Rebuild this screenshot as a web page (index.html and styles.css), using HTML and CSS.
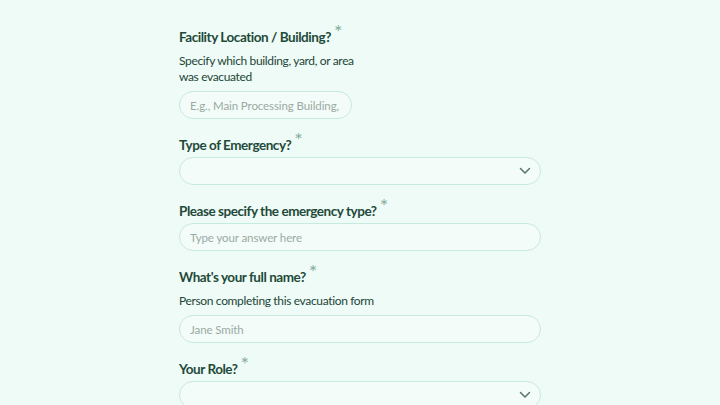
FILE: index.html
```html
<!DOCTYPE html>
<html lang="en">
<head>
<meta charset="utf-8">
<title>Evacuation Form</title>
<link rel="stylesheet" href="styles.css">
</head>
<body>
<main class="form">
  <div class="field narrow">
    <label class="label">Facility Location / Building?<span class="req">*</span></label>
    <p class="desc">Specify which building, yard, or area was evacuated</p>
    <div class="input short"><span class="ph">E.g., Main Processing Building, North Yard</span></div>
  </div>
  <div class="field">
    <label class="label">Type of Emergency?<span class="req">*</span></label>
    <div class="input select">
      <svg class="chev" width="12" height="8" viewBox="0 0 12 8"><path d="M1.5 1.5 L6 6 L10.5 1.5" fill="none" stroke="#58756a" stroke-width="1.5" stroke-linecap="round" stroke-linejoin="round"/></svg>
    </div>
  </div>
  <div class="field">
    <label class="label">Please specify the emergency type?<span class="req">*</span></label>
    <div class="input"><span class="ph">Type your answer here</span></div>
  </div>
  <div class="field">
    <label class="label">What's your full name?<span class="req">*</span></label>
    <p class="desc">Person completing this evacuation form</p>
    <div class="input"><span class="ph">Jane Smith</span></div>
  </div>
  <div class="field">
    <label class="label">Your Role?<span class="req">*</span></label>
    <div class="input select">
      <svg class="chev" width="12" height="8" viewBox="0 0 12 8"><path d="M1.5 1.5 L6 6 L10.5 1.5" fill="none" stroke="#58756a" stroke-width="1.5" stroke-linecap="round" stroke-linejoin="round"/></svg>
    </div>
  </div>
</main>
</body>
</html>
```
FILE: styles.css
```css
html, body {
  margin: 0;
  padding: 0;
  background: #effbf6;
  height: 100%;
  overflow: hidden;
}
body {
  font-family: "Lato", "Noto Sans", sans-serif;
  color: #1f4a3a;
}
.form {
  width: 362px;
  margin: 0 auto;
  padding-top: 27px;
  display: flex;
  flex-direction: column;
  gap: 16px;
}
.field {
  display: flex;
  flex-direction: column;
}
.field.narrow {
  width: 178px;
}
.label {
  font-size: 13.5px;
  font-weight: 700;
  letter-spacing: -0.45px;
  line-height: 20px;
  color: #1f4a3a;
  white-space: nowrap;
  margin-bottom: 2px;
}
.req {
  color: #86ae9d;
  font-weight: 400;
  font-size: 20px;
  margin-left: 3px;
  position: relative;
  top: -3px;
  line-height: 0;
}
.desc {
  margin: 4px 0 6px;
  font-size: 12px;
  letter-spacing: -0.35px;
  line-height: 16px;
  color: #234538;
}
.input {
  box-sizing: border-box;
  height: 28px;
  border: 1px solid #c6eadc;
  border-radius: 14px;
  background: #f3fcf8;
  display: flex;
  align-items: center;
  padding: 0 10px;
  overflow: hidden;
}
.input.short {
  width: 173px;
}
.ph {
  font-size: 11.5px;
  letter-spacing: -0.1px;
  color: #9aaaa3;
  white-space: nowrap;
  overflow: hidden;
}
.select {
  justify-content: flex-end;
  padding-right: 9px;
}
.chev {
  display: block;
}
```
